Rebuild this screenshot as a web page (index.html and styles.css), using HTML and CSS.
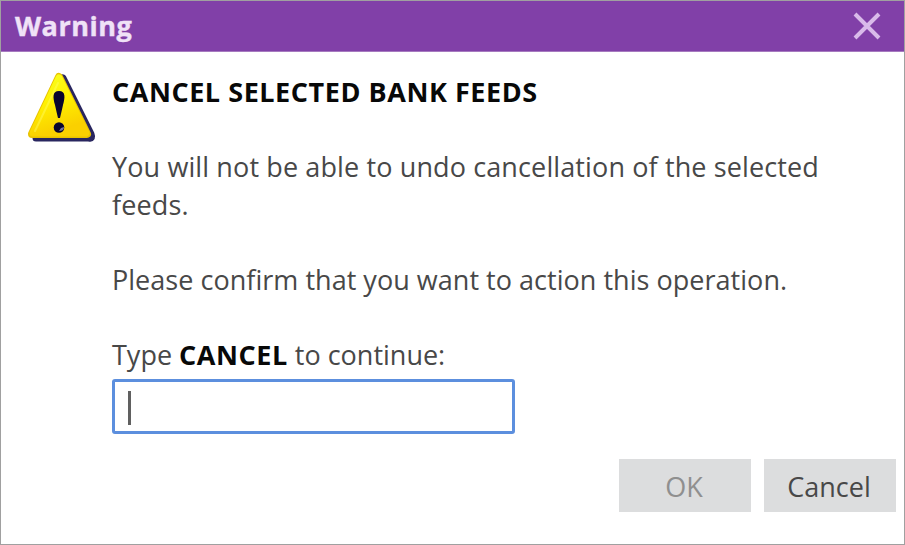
FILE: index.html
```html
<!DOCTYPE html>
<html lang="en">
<head>
<meta charset="utf-8">
<title>Warning</title>
<link rel="stylesheet" href="styles.css">
</head>
<body>
<section class="dialog" role="dialog" aria-labelledby="title">
  <header class="titlebar">
    <h1 class="title" id="title">Warning</h1>
    <svg class="close" viewBox="0 0 28 28" role="img" aria-label="Close"><path d="M2 2L26 26M26 2L2 26"/></svg>
  </header>
  <main class="content">
    <svg class="warning-icon" viewBox="0 0 72 74" aria-hidden="true">
      <defs>
        <linearGradient id="face" x1="0" y1="0" x2="0.3" y2="1">
          <stop offset="0" stop-color="#f8ff20"/>
          <stop offset="0.5" stop-color="#fff000"/>
          <stop offset="1" stop-color="#fad000"/>
        </linearGradient>
      </defs>
      <path class="shadow" d="M37 6L65 62Q67 67 63 66H10Z"/>
      <path class="edge" d="M33 5L61 62H6Z"/>
      <path class="face" d="M33 6L60 61H7Z"/>
      <path class="shine" d="M32 11L9 59"/>
      <path class="mark" d="M33 19C40 19 39 26 37 33Q35 42 34 46H32Q31 42 29 33C27 26 26 19 33 19Z"/>
      <circle class="mark" cx="33" cy="55.500" r="5.300"/>
      <path class="glint" d="M33 59Q38 59 38 55L35 56Z"/>
    </svg>
    <div class="message">
      <p class="heading"><strong>CANCEL SELECTED BANK FEEDS</strong></p>
      <p class="undo"><span class="undo-line">You will not be able to undo cancellation of the selected</span> feeds.</p>
      <p class="confirm">Please confirm that you want to action this operation.</p>
      <p class="prompt">Type <strong>CANCEL</strong> to continue:</p>
      <div class="field"><span class="caret"></span></div>
    </div>
  </main>
  <footer class="actions">
    <button class="button" disabled>OK</button>
    <button class="button">Cancel</button>
  </footer>
</section>
</body>
</html>
```
FILE: styles.css
```css
* { box-sizing: border-box; }
body { margin: 0; }
.dialog {
  width: 905px;
  height: 545px;
  border: 1px solid #a0a0a0;
  background: #fff;
  color: #484848;
  font-family: "Open Sans", "Noto Sans", sans-serif;
  font-size: 27px;
  display: flex;
  flex-direction: column;
  overflow: hidden;
}
.titlebar {
  height: 51px;
  flex: none;
  background: #8140a8;
  border-bottom: 1px solid #a67abf;
  display: flex;
  justify-content: space-between;
  align-items: center;
  padding: 0 23px 0 14px;
}
.title { margin: 0; color: #f0e2f7; font-size: 27px; line-height: 50px; font-weight: 700; letter-spacing: 0.5px; -webkit-text-stroke: 0.4px #f0e2f7; }
.close { width: 28px; height: 28px; fill: none; stroke: #d9baea; stroke-width: 4; }
.content { display: flex; padding: 20px 0 0 25px; flex: 1; }
.warning-icon { width: 72px; height: 74px; flex: none; }
.shadow { fill: #29265f; stroke: #29265f; stroke-width: 7; stroke-linejoin: round; }
.edge { fill: #e8c200; stroke: #e8c200; stroke-width: 8; stroke-linejoin: round; }
.face { fill: url(#face); stroke: url(#face); stroke-width: 7; stroke-linejoin: round; }
.shine { fill: none; stroke: #ffff70; stroke-width: 2; stroke-linecap: round; opacity: .4; }
.mark { fill: #09052e; }
.glint { fill: #7775a0; }
.message { margin-left: 14px; width: 720px; padding-top: 1px; }
.message p { margin: 0 0 37.5px; line-height: 37.5px; white-space: nowrap; }
.message strong { color: #080808; font-weight: 700; letter-spacing: 0.55px; }
.undo { letter-spacing: 0.12px; }
.undo-line { display: block; }
.confirm { letter-spacing: 0.03px; }
.message .prompt { margin-bottom: 6px; }
.field { width: 403px; height: 55px; border: 3px solid #5c8fde; border-radius: 3px; padding: 9px 0 0 13px; }
.caret { display: block; width: 3px; height: 34px; background: #606060; }
.actions { display: flex; justify-content: flex-end; gap: 13px; padding: 0 8px 32px; }
.button { width: 132px; height: 53px; border: 0; padding: 2px 2px 0 0; background: #dcddde; font: inherit; color: #484848; }
.button:disabled { color: #8f8f8f; }
```
